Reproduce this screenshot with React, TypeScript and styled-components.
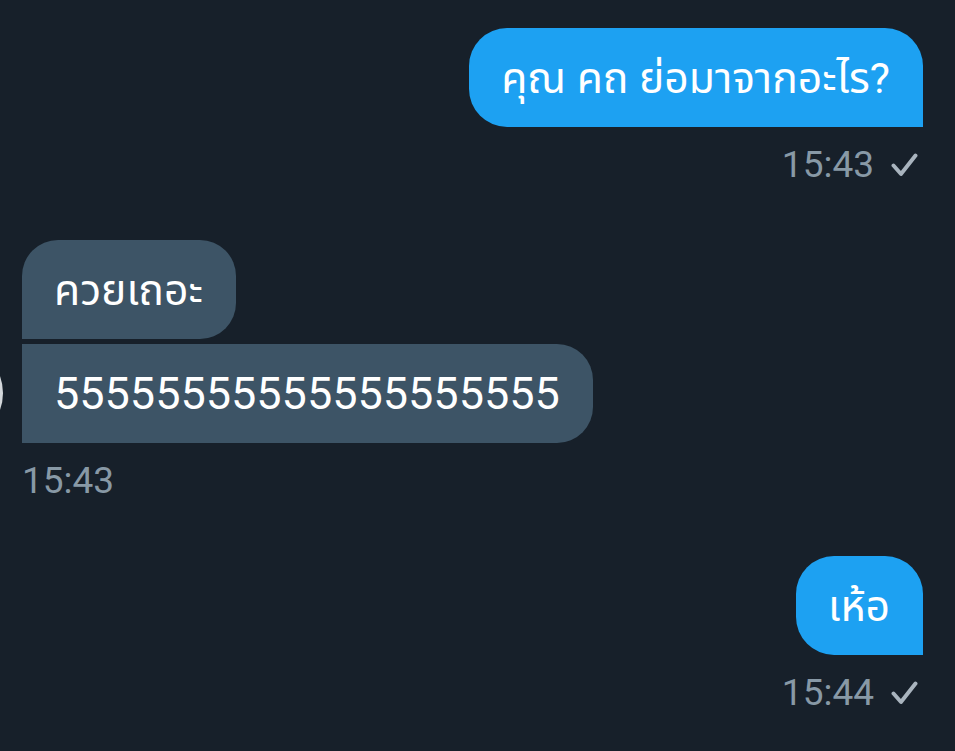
import React from "react";
import styled, { createGlobalStyle } from "styled-components";

const Global = createGlobalStyle`
  html, body { margin: 0; padding: 0; background: #17202a; }
  body { font-family: Roboto, "Noto Sans", "Noto Sans Thai", sans-serif; overflow: hidden; }
`;

const Page = styled.div`
  width: 955px;
  height: 751px;
  box-sizing: border-box;
  padding: 28px 32px 0 22px;
  display: flex;
  flex-direction: column;
  gap: 55px;
  background: #17202a;
  overflow: hidden;
`;

const Group = styled.div<{ $sent?: boolean }>`
  display: flex;
  flex-direction: column;
  align-items: ${(p) => (p.$sent ? "flex-end" : "flex-start")};
  gap: 5px;
  position: relative;
`;

const Bubble = styled.div<{ $sent?: boolean; $thai?: boolean; $radius: string }>`
  box-sizing: border-box;
  height: 99px;
  display: flex;
  align-items: center;
  padding: 0 33px 0 32px;
  border-radius: ${(p) => p.$radius};
  background: ${(p) => (p.$sent ? "#1da1f2" : "#3d5466")};
  color: #ffffff;
  font-size: ${(p) => (p.$thai ? "42.6px" : "45px")};
  line-height: 58px;
  white-space: nowrap;
`;

const Meta = styled.div`
  margin-top: 13px;
  display: flex;
  align-items: center;
  gap: 16px;
  height: 40px;
  padding-right: 5px;
  color: #8899a6;
  font-size: 37px;
  line-height: 40px;
`;

const Avatar = styled.div`
  position: absolute;
  left: -119px;
  top: 103px;
  width: 100px;
  height: 100px;
  border-radius: 50%;
  background: #d3d7db;
`;

const Check = () => (
  <svg width="28" height="28" viewBox="0 0 28 28" fill="none">
    <path d="M3.5 14.5 L11 23 L25.5 4.5" stroke="#a9b4be" strokeWidth="3.9" strokeLinecap="round" strokeLinejoin="round" />
  </svg>
);

export default function App() {
  return (
    <>
      <Global />
      <Page>
        <Group $sent>
          <Bubble $sent $thai $radius="38px 38px 0 38px">คุณ คถ ย่อมาจากอะไร?</Bubble>
          <Meta>
            <span>15:43</span>
            <Check />
          </Meta>
        </Group>
        <Group>
          <Avatar />
          <Bubble $thai $radius="36px 36px 36px 0">ควยเถอะ</Bubble>
          <Bubble $radius="0 36px 36px 0">55555555555555555555</Bubble>
          <Meta>
            <span>15:43</span>
          </Meta>
        </Group>
        <Group $sent>
          <Bubble $sent $thai $radius="38px 38px 0 38px">เห้อ</Bubble>
          <Meta>
            <span>15:44</span>
            <Check />
          </Meta>
        </Group>
      </Page>
    </>
  );
}
